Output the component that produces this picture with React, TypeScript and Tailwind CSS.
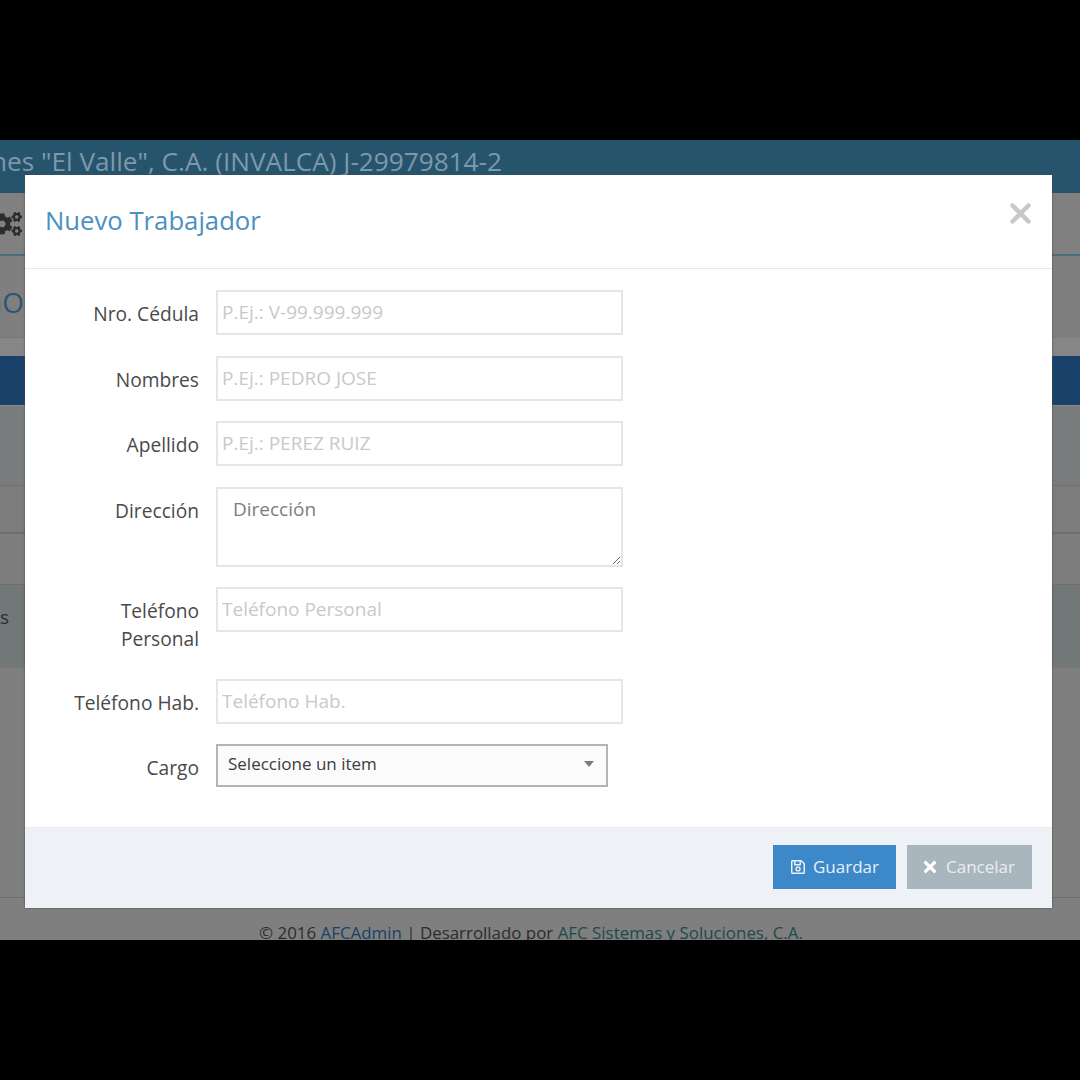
import { FaCogs, FaRegSave, FaTimes } from "react-icons/fa";

const font = { fontFamily: '"Open Sans", sans-serif' };

function Field({ label, placeholder, mb }: { label: string; placeholder: string; mb: string }) {
  return (
    <div className={`flex ${mb}`}>
      <label className="w-[175px] pr-[1px] pt-[9px] text-right text-[19.2px] leading-[29px] text-[#4a4a4a]">{label}</label>
      <input
        className="ml-[16px] w-[407px] h-[45px] border-2 border-[#e6e6e6] pl-[4px] pr-[5px] pb-[1px] text-[19px] bg-white placeholder:text-[#c9c9c9] outline-none"
        placeholder={placeholder}
        readOnly
      />
    </div>
  );
}

export default function App() {
  return (
    <div className="relative w-[1080px] h-[1080px] bg-black overflow-hidden" style={font}>
      <div className="absolute left-0 top-[140px] w-[1080px] h-[800px] overflow-hidden bg-[#7f7f7f] flex flex-col">
        <div className="h-[53px] bg-[#26546d] w-[502px] flex justify-end whitespace-nowrap text-[26.2px] leading-[43px] text-[#7d99a9] overflow-hidden shrink-0">
          <span className="shrink-0">Inversiones "El Valle", C.A. (INVALCA) J-29979814-2</span>
        </div>
        <div className="h-[53px] bg-[#26546d] absolute left-[502px] top-0 w-[578px]" />
        <div className="h-[61px] shrink-0 bg-[#808080] flex items-center justify-end w-full">
          <div className="w-[22px] mr-auto overflow-hidden flex justify-end text-[#2c2c2c] mt-[1px]">
            <FaCogs className="shrink-0 text-[30px]" />
          </div>
        </div>
        <div className="h-[2px] shrink-0 bg-[#4b6b80]" />
        <div className="h-[82px] shrink-0 bg-[#7f7f7f] border-b border-[#787878] text-[28px] leading-[92px] text-[#2f5570] whitespace-nowrap overflow-hidden flex justify-end w-[24px]">
          <span className="shrink-0">nO</span>
        </div>
        <div className="h-[18px] shrink-0 bg-[#868686]" />
        <div className="h-[49px] shrink-0 bg-[#1a4169]" />
        <div className="h-[80px] shrink-0 bg-[#787c7c] border-t border-[#8a8a8a]" />
        <div className="h-[47px] shrink-0 bg-[#7c7c7c] border-t border-[#707070]" />
        <div className="h-[52px] shrink-0 bg-[#7d7d7d] border-t-2 border-[#6e6e6e]" />
        <div className="h-[84px] shrink-0 bg-[#727777] border-t border-[#6a6f6f] text-[19px] leading-[64px] text-[#2b2f30] whitespace-nowrap overflow-hidden flex justify-end w-full">
          <span className="mr-auto">s</span>
        </div>
        <div className="h-[229px] shrink-0 bg-[#7f7f7f]" />
        <div className="shrink-0 border-t border-[#6d6d6d] pt-[23px] pr-[18px] text-center text-[16.9px] leading-[24px] text-[#2c2c2c] whitespace-nowrap">
          © 2016 <span className="text-[#1a4068]">AFCAdmin</span> | Desarrollado por <span className="text-[#1c4a4a]">AFC Sistemas y Soluciones, C.A.</span>
        </div>
      </div>

      <div className="absolute left-[25px] top-[175px] w-[1027px] h-[733px] bg-white flex flex-col shadow-[0_0_2px_#4a4a4a]">
        <div className="h-[94px] shrink-0 border-b border-[#e9e9e9] flex items-start justify-between pl-[20px] pr-[21px]">
          <h4 className="mt-[28px] text-[25.7px] leading-[36px] text-[#4a90c2]">Nuevo Trabajador</h4>
          <svg className="mt-[28px] w-[21px] h-[21px]" viewBox="0 0 21 21" stroke="#c8c8c8" strokeWidth="4.5" strokeLinecap="round">
            <path d="M2.5 2.5 18.5 18.5M18.5 2.5 2.5 18.5" />
          </svg>
        </div>
        <div className="flex-1 pt-[21px]">
          <Field label="Nro. Cédula" placeholder="P.Ej.: V-99.999.999" mb="mb-[20.67px]" />
          <Field label="Nombres" placeholder="P.Ej.: PEDRO JOSE" mb="mb-[20.67px]" />
          <Field label="Apellido" placeholder="P.Ej.: PEREZ RUIZ" mb="mb-[20.67px]" />
          <div className="flex mb-[20px]">
            <label className="w-[175px] pr-[1px] pt-[9px] text-right text-[19.2px] leading-[29px] text-[#4a4a4a]">Dirección</label>
            <textarea
              className="ml-[16px] w-[407px] h-[80px] border-2 border-[#e6e6e6] pl-[15px] pt-[6px] text-[19px] leading-[29px] placeholder:text-[#7d7d7d] outline-none"
              placeholder="Dirección"
              readOnly
            />
          </div>
          <div className="flex mb-[26px]">
            <label className="w-[175px] pl-[60px] pr-[1px] pt-[10px] text-right text-[19.2px] leading-[28px] text-[#4a4a4a]">Teléfono Personal</label>
            <input
              className="ml-[16px] w-[407px] h-[45px] border-2 border-[#e6e6e6] pl-[4px] pr-[5px] pb-[1px] text-[19px] placeholder:text-[#c9c9c9] outline-none"
              placeholder="Teléfono Personal"
              readOnly
            />
          </div>
          <Field label="Teléfono Hab." placeholder="Teléfono Hab." mb="mb-[20px]" />
          <div className="flex">
            <label className="w-[175px] pr-[1px] pt-[9px] text-right text-[19.2px] leading-[29px] text-[#4a4a4a]">Cargo</label>
            <div className="relative ml-[16px] w-[392px] h-[43px] border-2 border-[#b4b4b4] bg-[#fbfbfb] pl-[10px] text-[17px] leading-[36px] text-[#3c3c3c]">
              Seleccione un item
              <span className="absolute right-[12px] top-[15px] w-0 h-0 border-x-[5px] border-x-transparent border-t-[6px] border-t-[#7d7d7d]" />
            </div>
          </div>
        </div>
        <div className="h-[81px] shrink-0 bg-[#eef2f6] border-t border-[#e9edf1] flex justify-end items-start gap-[11px] pt-[17px] pr-[20px]">
          <button className="w-[123px] h-[44px] bg-[#3d88c8] text-[#e6f0f8] text-[17px] flex items-center justify-center gap-[7px]">
            <FaRegSave className="text-[16px]" />
            Guardar
          </button>
          <button className="w-[125px] h-[44px] pr-[3px] bg-[#a9b6bd] text-[#e9eef0] text-[17px] flex items-center justify-center gap-[7px]">
            <FaTimes className="text-[18px] text-white" />
            Cancelar
          </button>
        </div>
      </div>
    </div>
  );
}
